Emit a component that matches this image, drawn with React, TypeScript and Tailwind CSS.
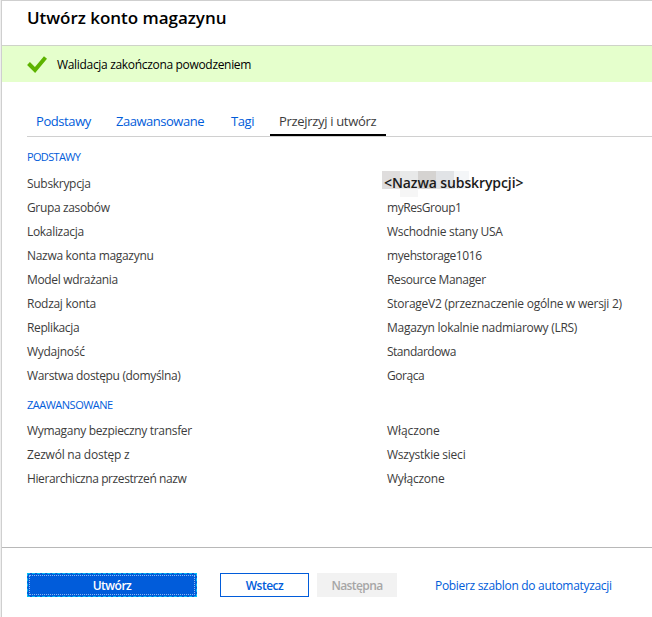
type Row = { label: string; value: string; lt: string; vt: string };

const basics: Row[] = [
  { label: 'Grupa zasobów', value: 'myResGroup1', lt: 'tracking-[-0.35px]', vt: 'tracking-[-0.45px]' },
  { label: 'Lokalizacja', value: 'Wschodnie stany USA', lt: 'tracking-[-0.32px]', vt: 'tracking-[-0.27px]' },
  { label: 'Nazwa konta magazynu', value: 'myehstorage1016', lt: 'tracking-[-0.31px]', vt: 'tracking-[-0.4px]' },
  { label: 'Model wdrażania', value: 'Resource Manager', lt: 'tracking-[-0.33px]', vt: 'tracking-[-0.37px]' },
  { label: 'Rodzaj konta', value: 'StorageV2 (przeznaczenie ogólne w wersji 2)', lt: 'tracking-[-0.28px]', vt: 'tracking-[-0.26px]' },
  { label: 'Replikacja', value: 'Magazyn lokalnie nadmiarowy (LRS)', lt: 'tracking-[-0.38px]', vt: 'tracking-[-0.28px]' },
  { label: 'Wydajność', value: 'Standardowa', lt: 'tracking-[-0.28px]', vt: 'tracking-[-0.5px]' },
  { label: 'Warstwa dostępu (domyślna)', value: 'Gorąca', lt: 'tracking-[-0.34px]', vt: 'tracking-[-0.45px]' },
];

const advanced: Row[] = [
  { label: 'Wymagany bezpieczny transfer', value: 'Włączone', lt: 'tracking-[-0.32px]', vt: 'tracking-[-0.1px]' },
  { label: 'Zezwól na dostęp z', value: 'Wszystkie sieci', lt: 'tracking-[-0.22px]', vt: 'tracking-[-0.23px]' },
  { label: 'Hierarchiczna przestrzeń nazw', value: 'Wyłączone', lt: 'tracking-[-0.4px]', vt: 'tracking-[-0.22px]' },
];

function DetailRow({ label, value, lt, vt }: Row) {
  return (
    <div className="flex h-6 items-center whitespace-nowrap">
      <div className="w-[360px]"><span className={lt}>{label}</span></div>
      <div><span className={vt}>{value}</span></div>
    </div>
  );
}

export default function App() {
  return (
    <div className="h-[617px] w-[652px] overflow-hidden bg-[#efefef] pl-px font-['Open_Sans','Noto_Sans',sans-serif] text-[12px] text-[#3c3c3c]">
      <div className="flex h-full flex-col border-t border-l border-[#cfcfcf] bg-white">
        <header className="flex h-11 shrink-0 items-center pb-[11px] pl-[25px] text-[17px] font-semibold whitespace-nowrap text-black">
          <h1><span className="tracking-[-0.03px]">Utwórz konto magazynu</span></h1>
        </header>
        <div className="flex h-[37px] shrink-0 items-center border-t border-[#ced3c8] bg-[#e5ffcc] pl-[25px] text-black">
          <svg width="20" height="17" viewBox="0 0 20 17" className="mr-[10px]">
            <path d="M1.5 7.5L8 14L18.5 1.5" fill="none" stroke="#5db300" strokeWidth="4" />
          </svg>
          <span className="pt-[2px] tracking-[-0.32px]">Walidacja zakończona powodzeniem</span>
        </div>
        <nav className="mt-[26px] ml-[25px] flex h-[29px] shrink-0 border-b border-[#d0d0d0] text-[13px] leading-[26px] whitespace-nowrap text-[#015cda]">
          <a className="w-[80px] pl-[9px]"><span className="tracking-[-0.42px]">Podstawy</span></a>
          <a className="w-[115px] pl-[9px]"><span className="tracking-[-0.48px]">Zaawansowane</span></a>
          <a className="w-[48px] pl-[9px]"><span className="tracking-[-0.4px]">Tagi</span></a>
          <a className="w-[116px] border-b-2 border-black pl-[9px] text-[#3c3c3c]"><span className="tracking-[-0.32px]">Przejrzyj i utwórz</span></a>
        </nav>
        <main className="flex shrink-0 grow flex-col pl-[25px]">
          <h2 className="mt-[10px] h-5 text-[11px] leading-5 text-[#015cda]"><span className="tracking-[-0.65px]">PODSTAWY</span></h2>
          <div className="mt-[5px] flex h-6 items-center whitespace-nowrap">
            <div className="w-[355px]"><span className="tracking-[-0.3px]">Subskrypcja</span></div>
            <div className="relative mb-[2px] text-[14px] leading-5 font-semibold text-[#1b1b1b]">
              <div className="absolute top-[-2px] left-0 flex">
                <i className="h-[18px] w-[18px] bg-[#dfdddd]" />
                <i className="h-[26px] w-[18px] border-b-8 border-[#f6f6f6] bg-[#e8e9e9]" />
                <i className="h-[18px] w-[18px] bg-[#d5d3d1]" />
                <i className="h-[18px] w-[18px] bg-[#e1e3e6]" />
                <i className="h-[18px] w-[15px] bg-[#f4f6f8]" />
              </div>
              <span className="relative ml-[2px] tracking-[-0.1px]">{'<Nazwa subskrypcji>'}</span>
            </div>
          </div>
          {basics.map((row) => <DetailRow key={row.label} {...row} />)}
          <h2 className="mt-[7px] h-5 text-[11px] leading-5 text-[#015cda]"><span className="tracking-[-0.5px]">ZAAWANSOWANE</span></h2>
          <div className="mt-1">{advanced.map((row) => <DetailRow key={row.label} {...row} />)}</div>
        </main>
        <footer className="flex h-[70px] shrink-0 items-start border-t border-[#b8b8b8] pt-[25px] pl-[25px] font-semibold whitespace-nowrap">
          <button className="h-6 w-[170px] border border-dashed border-[#00bcf2] bg-[#015cda] p-px text-white">
            <span className="flex h-full items-center justify-center border border-dotted border-[#8db8f0] pt-[2px] tracking-[-0.5px]">Utwórz</span>
          </button>
          <button className="ml-[23px] h-6 w-[89px] border border-[#015cda] pt-[2px] tracking-[-0.5px] text-[#015cda]"><span>Wstecz</span></button>
          <button className="ml-2 h-6 w-20 bg-[#f2f2f2] pt-[2px] tracking-[-0.6px] text-[#a6a6a6]"><span>Następna</span></button>
          <a className="ml-[38px] leading-[26px] font-normal tracking-[-0.31px] text-[#015cda]"><span>Pobierz szablon do automatyzacji</span></a>
        </footer>
      </div>
    </div>
  );
}
